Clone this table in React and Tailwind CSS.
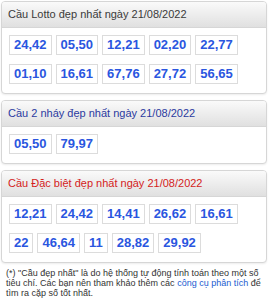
export default function App() {
  const Box = ({ v }) => (
    <span className="inline-block border border-[#dcdcdc] bg-white px-[4px] py-[1px] text-[13px] font-bold leading-[16px] text-[#2a56e0]">
      {v}
    </span>
  );
  const Card = ({ title, color, rows }) => (
    <div className="rounded-[4px] border border-[#d6d6d6] bg-white shadow-[0_1px_2px_rgba(0,0,0,0.08)] overflow-hidden">
      <div className={`h-[26px] border-b border-[#d6d6d6] bg-gradient-to-b from-[#fafafa] to-[#e0e0e0] px-[6px] text-[11px] leading-[25px] ${color}`}>
        {title}
      </div>
      <div className="flex flex-col gap-[9px] px-[7px] pt-[7px] pb-[9px]">
        {rows.map((r, i) => (
          <div key={i} className="flex gap-[4px]">
            {r.map((v, j) => (
              <Box key={j} v={v} />
            ))}
          </div>
        ))}
      </div>
    </div>
  );
  return (
    <div className="w-[272px] h-[300px] bg-white px-[1px] pt-[1px] font-['Liberation_Sans',Arial,sans-serif]">
      <div className="w-[266px] flex flex-col gap-[6px]">
        <Card
          title="Cầu Lotto đẹp nhất ngày 21/08/2022"
          color="text-[#3a3a3a]"
          rows={[
            ["24,42", "05,50", "12,21", "02,20", "22,77"],
            ["01,10", "16,61", "67,76", "27,72", "56,65"],
          ]}
        />
        <Card
          title="Cầu 2 nháy đẹp nhất ngày 21/08/2022"
          color="text-[#2b3aa0]"
          rows={[["05,50", "79,97"]]}
        />
        <Card
          title="Cầu Đặc biệt đẹp nhất ngày 21/08/2022"
          color="text-[#d41c1c]"
          rows={[
            ["12,21", "24,42", "14,41", "26,62", "16,61"],
            ["22", "46,64", "11", "28,82", "29,92"],
          ]}
        />
      </div>
      <p className="mt-[5px] w-[266px] pl-[5px] pr-[2px] text-[9px] leading-[10px] text-[#333]">
        (*) "Cầu đẹp nhất" là do hệ thống tự động tính toán theo một số tiêu chí. Các bạn nên tham khảo thêm các{" "}
        <span className="text-[#1a5bd0]">công cụ phân tích</span> để tìm ra cặp số tốt nhất.
      </p>
    </div>
  );
}
